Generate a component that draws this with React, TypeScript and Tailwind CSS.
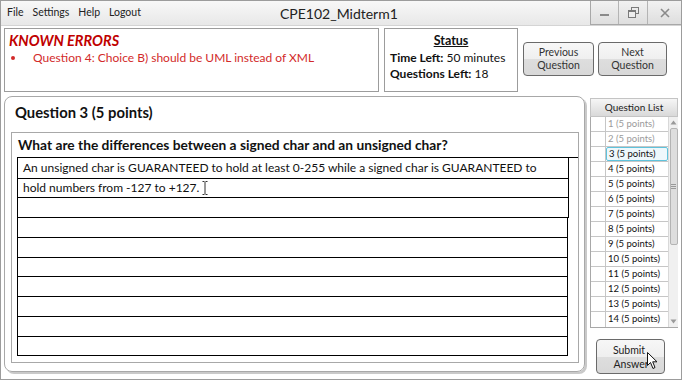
import React from "react";

const F = "font-['Lato','Open_Sans',sans-serif]";
const btnBg =
  "bg-[linear-gradient(to_bottom,#f7f7f7_0%,#efefef_50%,#dedede_50%,#d8d8d8_100%)]";

function WinButtons() {
  return (
    <div className="flex h-[24px] border-b border-l border-[#a8a8a8] bg-linear-to-b from-[#f2f2f2] to-[#dedede]">
      <div className="w-[28px] flex items-center justify-center border-r border-[#b4b4b4]">
        <div className="w-[9px] h-[1.5px] bg-[#8a8a8a] mt-[5px]" />
      </div>
      <div className="w-[29px] flex items-center justify-center border-r border-[#b4b4b4]">
        <svg width="11" height="11" viewBox="0 0 11 11">
          <rect x="3.5" y="0.5" width="7" height="6" fill="none" stroke="#7a7a7a" />
          <rect x="0.5" y="3.5" width="7" height="7" fill="#eee" stroke="#7a7a7a" />
          <line x1="0.5" y1="4.5" x2="7.5" y2="4.5" stroke="#7a7a7a" />
        </svg>
      </div>
      <div className="w-[33px] flex items-center justify-center">
        <svg width="10" height="10" viewBox="0 0 10 10">
          <path d="M1 1 L9 9 M9 1 L1 9" stroke="#8a8a8a" strokeWidth="1.6" />
        </svg>
      </div>
    </div>
  );
}

function Btn({ l1, l2, w, cls }: { l1: string; l2: string; w: string; cls?: string }) {
  return (
    <div
      className={`${w} h-[34px] rounded-[4px] border border-[#6a6a6a] ${btnBg} flex flex-col items-center justify-center text-[10.5px] leading-[13px] text-[#333] ${cls ?? ""}`}
    >
      <span>{l1}</span>
      <span>{l2}</span>
    </div>
  );
}

const rowH = [21, 19, 20, 20, 20, 19, 20, 20, 20, 19];

function AnswerGrid() {
  return (
    <div className="ml-[5px] mt-0 border-t border-black">
      {rowH.map((h, i) => (
        <div
          key={i}
          className={`relative border-b border-l border-r border-black ${i < 3 ? "w-[552px]" : "w-[551px]"} flex items-center pl-[5px] text-[12px] text-[#111] whitespace-nowrap`}
          style={{ height: h }}
        >
          {i === 0 &&
            "An unsigned char is GUARANTEED to hold at least 0-255 while a signed char is GUARANTEED to"}
          {i === 1 && (
            <>
              <span>hold numbers from -127 to +127.</span>
              <svg className="ml-[3px]" width="6" height="14" viewBox="0 0 6 14">
                <path d="M0.5 0.5 H2.5 M3.5 0.5 H5.5 M3 1 V13 M0.5 13.5 H2.5 M3.5 13.5 H5.5" stroke="#333" strokeWidth="1" fill="none" />
              </svg>
            </>
          )}
        </div>
      ))}
    </div>
  );
}

const items = Array.from({ length: 14 }, (_, i) => `${i + 1} (5 points)`);

function QuestionList() {
  return (
    <div className="flex flex-col w-[88px]">
      <div className="h-[19px] mt-[2px] bg-linear-to-b from-[#f6f6f6] to-[#d9d9d9] border border-[#c4c4c4] flex items-center justify-center text-[10px] text-[#222]">
        Question List
      </div>
      <div className="flex border-l border-b border-[#a8a8a8]">
        <div className="flex flex-col">
          {items.map((t, i) => (
            <div key={i} className="flex h-[15px] border-b border-[#c6c6c6] last:border-b-0">
              <div className="w-[15px] border-r border-[#c6c6c6]" />
              <div
                className={`w-[62px] pl-[2px] flex items-center text-[9.5px] ${
                  i < 2 ? "text-[#9a9a9a]" : "text-[#111]"
                } ${i === 2 ? "border border-[#5fc3dc] bg-[#eef8fc] rounded-[2px]" : ""}`}
              >
                {t}
              </div>
            </div>
          ))}
        </div>
        <div className="w-[10px] bg-[#f0f0f0] border-l border-[#d8d8d8] flex flex-col items-center">
          <svg className="mt-[3px]" width="7" height="5" viewBox="0 0 7 5">
            <path d="M0.5 4.5 L3.5 0.5 L6.5 4.5 Z" fill="#9a9a9a" />
          </svg>
          <div className="mt-[3px] w-[8px] h-[117px] bg-[#dedede] border border-[#b4b4b4] rounded-[2px] flex flex-col items-center justify-center gap-[1px]">
            <div className="w-[5px] h-px bg-[#999]" />
            <div className="w-[5px] h-px bg-[#999]" />
            <div className="w-[5px] h-px bg-[#999]" />
          </div>
          <div className="flex-1" />
          <svg className="mb-[3px]" width="7" height="5" viewBox="0 0 7 5">
            <path d="M0.5 0.5 L3.5 4.5 L6.5 0.5 Z" fill="#9a9a9a" />
          </svg>
        </div>
      </div>
      <div className="relative ml-[6px] mt-[11px] w-[69px] h-[35px]">
        <div
          className={`w-full h-full rounded-[4px] border border-[#6a6a6a] ${btnBg} flex flex-col items-center justify-center text-[10.5px] leading-[14px] text-[#222]`}
        >
          <span className="-ml-[3px]">Submit</span>
          <span className="ml-[1px]">Answer</span>
        </div>
        <svg className="absolute left-[51px] top-[13px]" width="12" height="18" viewBox="0 0 12 18">
          <path
            d="M0.5 0.5 L0.5 13.5 L3.5 10.5 L6 16.5 L8 15.5 L5.7 9.8 L10 9.8 Z"
            fill="#fff"
            stroke="#111"
            strokeWidth="1"
            strokeLinejoin="round"
          />
        </svg>
      </div>
    </div>
  );
}

export default function App() {
  return (
    <div className={`${F} w-[682px] h-[380px] bg-white border border-[#9c9c9c] flex flex-col overflow-hidden`}>
      {/* title bar */}
      <div className="h-[25px] flex items-start bg-linear-to-b from-[#f8f8f8] to-[#e8e8e8] border-b border-[#d4d4d4]">
        <div className="w-[279px] h-[24px] flex items-center gap-[9px] pl-[6px] text-[10.5px] text-[#222]">
          <span>File</span>
          <span>Settings</span>
          <span>Help</span>
          <span>Logout</span>
        </div>
        <div className="h-[24px] flex items-center text-[14px] text-[#222]">CPE102_Midterm1</div>
        <div className="flex-1" />
        <WinButtons />
      </div>

      {/* top row */}
      <div className="flex items-start mt-[2px]">
        <div className="ml-[3px] w-[375px] h-[64px] border border-[#9c9c9c] pl-[4px] pt-[2px]">
          <div className="text-[14.5px] leading-[19px] font-bold italic text-[#c00000]">KNOWN ERRORS</div>
          <div className="flex items-center text-[12px] leading-[16px] text-[#d22a2a]">
            <span className="ml-[2px] w-[4px] h-[4px] rounded-full bg-[#d22a2a]" />
            <span className="ml-[18px]">Question 4: Choice B) should be UML instead of XML</span>
          </div>
        </div>
        <div className="ml-[5px] w-[134px] h-[64px] border border-[#9c9c9c] pl-[5px] pt-[4px] text-[12px] leading-[16.5px] text-[#111]">
          <div className="text-center font-bold underline pr-[5px] text-[12.5px]">Status</div>
          <div>
            <b>Time Left:</b> 50 minutes
          </div>
          <div>
            <b>Questions Left:</b> 18
          </div>
        </div>
        <Btn l1="Previous" l2="Question" w="w-[71px]" cls="ml-[5px] mt-[14px]" />
        <Btn l1="Next" l2="Question" w="w-[69px]" cls="ml-[4px] mt-[14px]" />
      </div>

      {/* bottom row */}
      <div className="flex items-start mt-[4px]">
        <div className="ml-[3px] w-[581px] h-[276px] rounded-[8px] border border-[#a8a8a8] shadow-[2px_2px_0_#c9c9c9] flex flex-col">
          <div className="pl-[10px] pt-[5px] h-[35px] text-[14.8px] leading-[20px] font-bold text-[#111]">
            Question 3 (5 points)
          </div>
          <div className="ml-[6px] w-[568px] h-[231px] border border-[#a8a8a8]">
            <div className="pl-[6px] h-[24px] flex items-center text-[13.75px] font-bold text-[#111]">
              What are the differences between a signed char and an unsigned char?
            </div>
            <AnswerGrid />
          </div>
        </div>
        <div className="ml-[5px]">
          <QuestionList />
        </div>
      </div>
    </div>
  );
}
